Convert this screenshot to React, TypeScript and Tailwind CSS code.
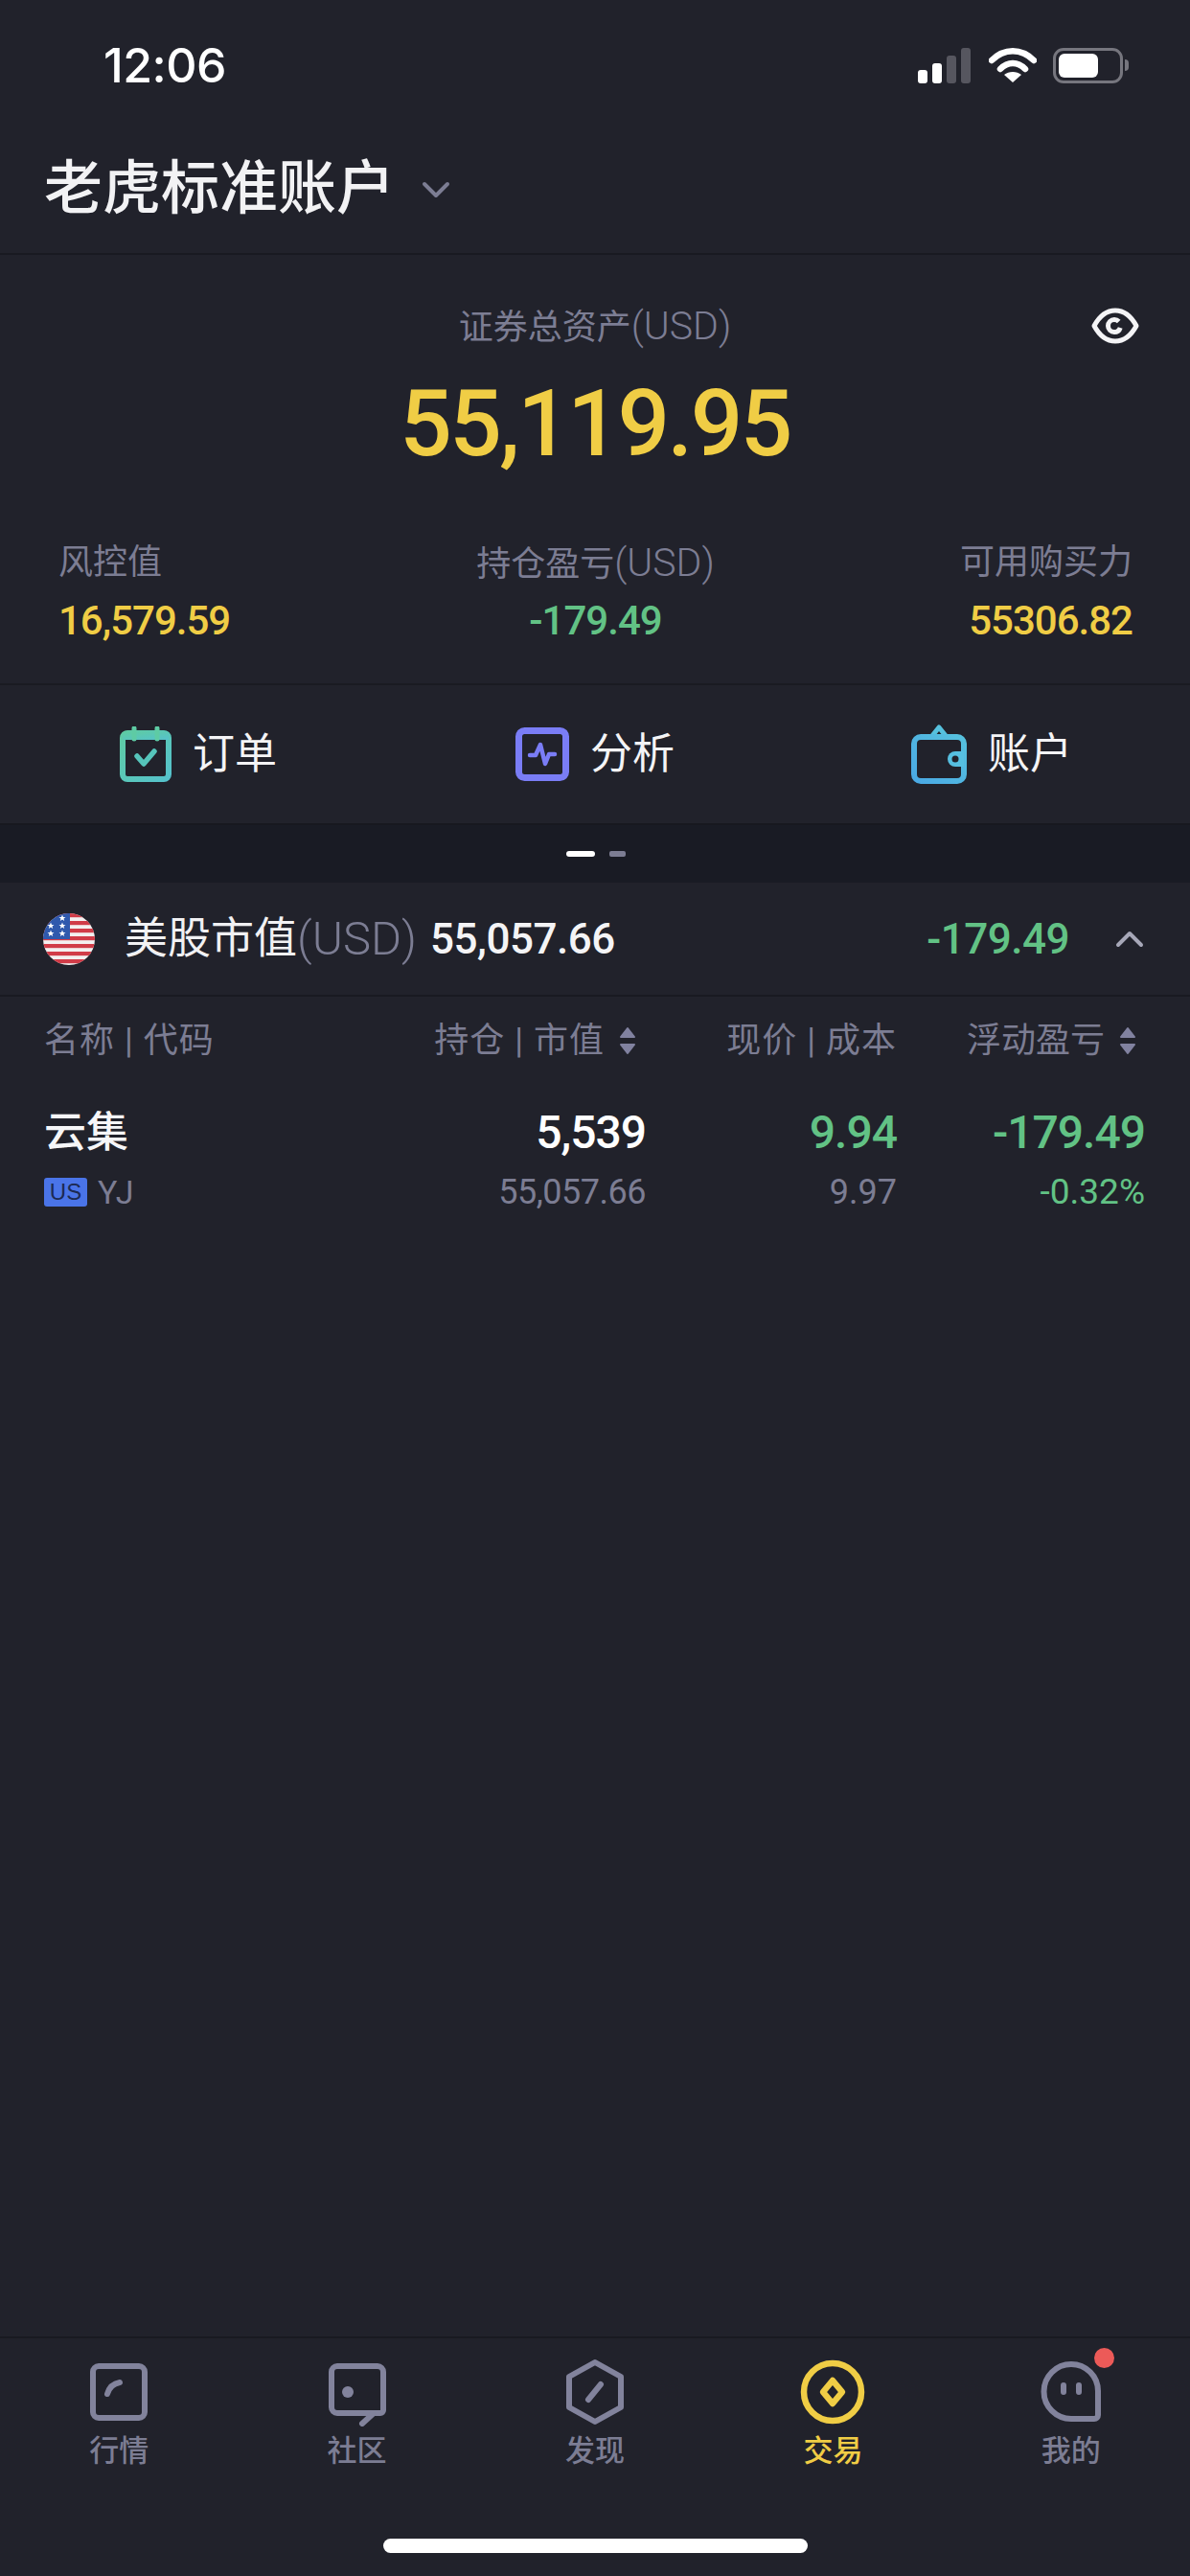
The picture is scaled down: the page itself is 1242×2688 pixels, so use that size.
import type { ReactNode } from "react";

const gray = "text-[#7c7d93]";

function StatusBar() {
  return (
    <div className="flex h-[132px] items-center justify-between pl-[108px] pr-[64px] pt-[4px]">
      <span className="[font-family:Inter,sans-serif] text-[50px] font-medium tracking-[-0.5px] text-white">
        12:06
      </span>
      <div className="flex items-center">
        <svg width="58" height="37" viewBox="0 0 58 37" className="mr-[16px]">
          <rect x="0" y="23" width="10" height="14" rx="3" fill="#fff" />
          <rect x="15" y="16" width="10" height="21" rx="3" fill="#fff" />
          <rect x="30" y="8" width="10" height="29" rx="3" fill="#56565f" />
          <rect x="45" y="0" width="10" height="37" rx="3" fill="#56565f" />
        </svg>
        <svg width="50" height="38" viewBox="0 0 50 38" className="mr-[17px]">
          <path d="M3 14C16 1 34 1 47 14" fill="none" stroke="#fff" strokeWidth="6.5" strokeLinecap="round" />
          <path d="M12 23C20 15 30 15 38 23" fill="none" stroke="#fff" strokeWidth="6.5" strokeLinecap="round" />
          <path d="M25 37L16 29C21 25 29 25 34 29Z" fill="#fff" />
        </svg>
        <div className="flex h-[37px] w-[73px] items-center rounded-[11px] border-[3px] border-[#76767e] p-[3px]">
          <div className="h-[25px] w-[41px] rounded-[6px] bg-white" />
        </div>
        <div className="ml-[2px] h-[12px] w-[4px] rounded-r-full bg-[#76767e]" />
      </div>
    </div>
  );
}

function Chevron({ up, className }: { up?: boolean; className: string }) {
  return (
    <svg viewBox="0 0 30 18" fill="none" className={className}>
      <path
        d={up ? "M3 15L15 3L27 15" : "M3 3L15 15L27 3"}
        stroke="currentColor"
        strokeWidth="4"
        strokeLinecap="round"
        strokeLinejoin="round"
      />
    </svg>
  );
}

function Summary() {
  return (
    <section className="border-b-2 border-[#1a1b22] pt-[54px] pb-[40px]">
      <div className="grid h-[40px] grid-cols-[1fr_auto_1fr] items-center px-[53px]">
        <div />
        <span className={`text-[36px] leading-[40px] ${gray}`}>
          证券总资产<span className="text-[41px] font-light">(USD)</span>
        </span>
        <svg viewBox="0 0 50 38" className="mb-[2px] h-[38px] w-[50px] justify-self-end" fill="none">
          <path
            d="M3 19C9 8 16 3 25 3S41 8 47 19C41 30 34 35 25 35S9 30 3 19Z"
            stroke="#f4f4f6"
            strokeWidth="5"
            strokeLinejoin="round"
          />
          <circle cx="24" cy="19" r="6.5" stroke="#f4f4f6" strokeWidth="5" strokeDasharray="33 8" strokeDashoffset="-2" />
        </svg>
      </div>
      <div className="mt-[32px] h-[100px] text-center text-[96px] leading-[100px] font-medium tracking-[-2.5px] text-[#f0cd45]">
        55,119.95
      </div>
      <div className="mt-[73px] grid grid-cols-3 pr-[60px] pl-[61px]">
        <StatCell label="风控值" value="16,579.59" className="text-left text-[#f0cd45]" />
        <StatCell label="持仓盈亏" unit="(USD)" value="-179.49" className="text-center text-[#62c285]" />
        <StatCell label="可用购买力" value="55306.82" className="text-right text-[#f0cd45]" />
      </div>
    </section>
  );
}

function StatCell({
  label,
  unit,
  value,
  className,
}: {
  label: string;
  unit?: string;
  value: string;
  className: string;
}) {
  return (
    <div className={className}>
      <div className={`h-[44px] text-[36px] leading-[44px] ${gray}`}>
        {label}
        {unit && <span className="text-[41px] font-light">{unit}</span>}
      </div>
      <div className="mt-[14px] h-[50px] text-[42px] leading-[50px] font-medium tracking-[-1px]">{value}</div>
    </div>
  );
}

function OrderIcon() {
  return (
    <svg width="54" height="58" viewBox="0 0 54 58" fill="none">
      <defs>
        <linearGradient id="order" x1="0" y1="0" x2="1" y2="1">
          <stop offset="0" stopColor="#5ecba4" />
          <stop offset="1" stopColor="#55c2cc" />
        </linearGradient>
      </defs>
      <rect x="3" y="7" width="48" height="48" rx="5" stroke="url(#order)" strokeWidth="6" />
      <rect x="3" y="7" width="48" height="7" fill="url(#order)" />
      <path d="M15 2V13M39 2V13" stroke="#5ecba4" strokeWidth="5" strokeLinecap="round" />
      <path d="M18 31L25 39L36 26" stroke="#56c5bb" strokeWidth="5.5" strokeLinecap="round" strokeLinejoin="round" />
    </svg>
  );
}

function AnalysisIcon() {
  return (
    <svg width="56" height="56" viewBox="0 0 56 56" fill="none">
      <rect x="3.500" y="3.500" width="49" height="49" rx="6" stroke="#7a7df6" strokeWidth="7" />
      <path
        d="M15 29H21L26 18L31 38L35 28H41"
        stroke="#7a7df6"
        strokeWidth="4.5"
        strokeLinecap="round"
        strokeLinejoin="round"
      />
    </svg>
  );
}

function WalletIcon() {
  return (
    <svg width="58" height="62" viewBox="0 0 58 62" fill="none">
      <defs>
        <linearGradient id="wallet" x1="1" y1="0" x2="0" y2="1">
          <stop offset="0" stopColor="#56c1de" />
          <stop offset="1" stopColor="#4aa9e4" />
        </linearGradient>
      </defs>
      <path d="M21 13L29 3L37 13" stroke="#56c1de" strokeWidth="5" strokeLinejoin="round" />
      <rect x="3" y="13" width="52" height="46" rx="7" stroke="url(#wallet)" strokeWidth="6" />
      <path d="M55 28H46A8 8 0 0 0 46 44H55Z" fill="#56bfe0" />
      <circle cx="46" cy="36" r="3.500" fill="#21222b" />
    </svg>
  );
}

function Actions() {
  const items: { icon: ReactNode; label: string }[] = [
    { icon: <OrderIcon />, label: "订单" },
    { icon: <AnalysisIcon />, label: "分析" },
    { icon: <WalletIcon />, label: "账户" },
  ];
  return (
    <div className="grid h-[144px] grid-cols-3">
      {items.map((item) => (
        <div key={item.label} className="flex items-center justify-center gap-[22px]">
          {item.icon}
          <span className="text-[44px] text-[#f4f4f6]">{item.label}</span>
        </div>
      ))}
    </div>
  );
}

function Pager() {
  return (
    <div className="flex h-[62px] items-center justify-center gap-[15px] border-t-2 border-[#17181f] bg-[#191b24] pl-[2px]">
      <div className="h-[6px] w-[30px] rounded-full bg-white" />
      <div className="h-[6px] w-[17px] rounded-[2px] bg-[#7c7d93]" />
    </div>
  );
}

function Star({ x, y }: { x: number; y: number }) {
  return (
    <path
      transform={`translate(${x} ${y})`}
      d="M0-3.600L1-1.100L3.500-1.100L1.500.5L2.200 3L0 1.600L-2.200 3L-1.500.5L-3.500-1.100L-1-1.100Z"
      fill="#fff"
    />
  );
}

function FlagIcon() {
  const stripes = [0, 8, 16, 24, 32, 40, 48];
  return (
    <svg width="54" height="54" viewBox="0 0 54 54" className="shrink-0">
      <defs>
        <clipPath id="flag-clip">
          <circle cx="27" cy="27" r="27" />
        </clipPath>
      </defs>
      <g clipPath="url(#flag-clip)">
        <rect width="54" height="54" fill="#f3f0f0" />
        {stripes.map((y) => (
          <rect key={y} x="0" y={y} width="54" height="4.200" fill="#d13c48" />
        ))}
        <rect x="0" y="0" width="28" height="27" fill="#2f59ad" />
        <Star x={20} y={5} />
        <Star x={8} y={13} />
        <Star x={20} y={13} />
        <Star x={8} y={21} />
        <Star x={20} y={21} />
      </g>
    </svg>
  );
}

function MarketRow() {
  return (
    <div className="flex h-[119px] items-center border-b-2 border-[#191a21] pr-[48px] pl-[45px]">
      <FlagIcon />
      <span className="ml-[31px] text-[45px] text-[#f1f1f3]">美股市值</span>
      <span className={`text-[49px] font-light ${gray}`}>(USD)</span>
      <span className="ml-[14px] text-[44px] font-medium tracking-[-0.5px] text-[#f4f4f6]">55,057.66</span>
      <span className="ml-auto text-[44px] font-medium tracking-[-0.5px] text-[#62c285]">-179.49</span>
      <Chevron up className="ml-[48px] h-[18px] w-[30px] text-[#a7a8b8]" />
    </div>
  );
}

function SortIcon() {
  return (
    <svg width="18" height="30" viewBox="0 0 18 30" className="ml-[15px] shrink-0" fill="#8182a0" stroke="#8182a0" strokeWidth="2" strokeLinejoin="round">
      <path d="M9 2L16 11H2Z" />
      <path d="M9 28L2 19H16Z" />
    </svg>
  );
}

function HoldingsTable() {
  return (
    <div className="pr-[47px] pl-[46px]">
      <div className={`flex h-[92px] items-center text-[36px] ${gray}`}>
        <div className="flex-1 tracking-[1px]">名称 | 代码</div>
        <div className="flex w-[240px] items-center justify-end pr-[10px] tracking-[1px]">
          持仓 | 市值
          <SortIcon />
        </div>
        <div className="w-[262px] text-right tracking-[1px]">现价 | 成本</div>
        <div className="flex w-[259px] items-center justify-end pr-[9px]">
          浮动盈亏
          <SortIcon />
        </div>
      </div>
      <div className="mt-[19px] flex h-[62px] items-center text-[48px] font-medium tracking-[-1px]">
        <div className="flex-1 text-[44px] tracking-normal text-[#f6f6f8]">云集</div>
        <div className="w-[240px] text-right text-white">5,539</div>
        <div className="w-[262px] text-right text-[#62c285]">9.94</div>
        <div className="w-[259px] text-right text-[#62c285]">-179.49</div>
      </div>
      <div className={`mt-[2px] flex h-[58px] items-center text-[36px] ${gray}`}>
        <div className="flex flex-1 items-center">
          <span className="flex h-[30px] w-[45px] items-center justify-center rounded-[3px] bg-[#4a74e8] [font-family:'Liberation_Sans',sans-serif] text-[24px] text-[#1c2a52]">
            US
          </span>
          <span className="ml-[11px] text-[34px]">YJ</span>
        </div>
        <div className="w-[240px] text-right tracking-[-0.5px]">55,057.66</div>
        <div className="w-[262px] text-right">9.97</div>
        <div className="w-[259px] text-right text-[37px] text-[#62c285]">-0.32%</div>
      </div>
    </div>
  );
}

const tabStroke = { stroke: "#82839c", strokeWidth: 6, fill: "none", strokeLinecap: "round", strokeLinejoin: "round" } as const;

function TabIcon({ children }: { children: ReactNode }) {
  return (
    <svg width="72" height="72" viewBox="0 0 72 72">
      {children}
    </svg>
  );
}

const tabs: { label: string; active?: boolean; dot?: boolean; icon: ReactNode }[] = [
  {
    label: "行情",
    icon: (
      <TabIcon>
        <rect x="9" y="9" width="54" height="54" rx="6" {...tabStroke} />
        <path d="M24 38C26 31 31 27 37 26" {...tabStroke} />
      </TabIcon>
    ),
  },
  {
    label: "社区",
    icon: (
      <TabIcon>
        <path d="M15 9H57A6 6 0 0 1 63 15V55A3 3 0 0 1 60 58H15A6 6 0 0 1 9 52V15A6 6 0 0 1 15 9Z" {...tabStroke} />
        <circle cx="26" cy="36" r="6" fill="#82839c" />
        <path d="M52 59L41 69" {...tabStroke} />
      </TabIcon>
    ),
  },
  {
    label: "发现",
    icon: (
      <TabIcon>
        <path d="M36 5L63 20V52L36 67L9 52V20Z" {...tabStroke} />
        <path d="M29 44L42 28" {...tabStroke} />
      </TabIcon>
    ),
  },
  {
    label: "交易",
    active: true,
    icon: (
      <svg width="72" height="72" viewBox="0 0 72 72" fill="none">
        <circle cx="36" cy="36" r="30" stroke="#f0cd45" strokeWidth="6.500" />
        <path d="M36 24L46 36L36 48L26 36Z" stroke="#f0cd45" strokeWidth="6.500" strokeLinejoin="round" />
      </svg>
    ),
  },
  {
    label: "我的",
    dot: true,
    icon: (
      <TabIcon>
        <path d="M36 7A28 28 0 0 1 64 35V60A4 4 0 0 1 60 64H36A28.500 28.500 0 0 1 36 7Z" {...tabStroke} />
        <path d="M28 29V36M44 29V36" {...tabStroke} />
      </TabIcon>
    ),
  },
];

function TabBar() {
  return (
    <nav className="grid h-[118px] shrink-0 grid-cols-5 border-t-2 border-[#191a21] pt-[20px]">
      {tabs.map((tab) => (
        <div
          key={tab.label}
          className={`flex flex-col items-center ${tab.active ? "text-[#f0cd45]" : "text-[#7c7d93]"}`}
        >
          <div className="relative h-[72px] w-[72px]">
            {tab.icon}
            {tab.dot && <span className="absolute -top-[10px] left-[60px] h-[21px] w-[21px] rounded-full bg-[#ec5a58]" />}
          </div>
          <span className="mt-[4px] text-[31px] leading-[44px] font-medium">{tab.label}</span>
        </div>
      ))}
    </nav>
  );
}

export default function App() {
  return (
    <div className="flex h-[2688px] w-[1242px] flex-col overflow-hidden bg-[#21222b] [font-family:Roboto,'Noto_Sans_CJK_SC',sans-serif]">
      <header className="border-b-2 border-[#191a21]">
        <StatusBar />
        <div className="flex h-[132px] items-center pl-[46px]">
          <h1 className="text-[61px] font-medium text-[#f2f2f4]">老虎标准账户</h1>
          <Chevron className="ml-[28px] h-[18px] w-[30px] text-[#7c7d93]" />
        </div>
      </header>
      <Summary />
      <Actions />
      <Pager />
      <MarketRow />
      <HoldingsTable />
      <div className="flex-1" />
      <TabBar />
      <div className="flex h-[132px] shrink-0 justify-center pt-[93px]">
        <div className="h-[15px] w-[443px] rounded-full bg-white" />
      </div>
    </div>
  );
}
